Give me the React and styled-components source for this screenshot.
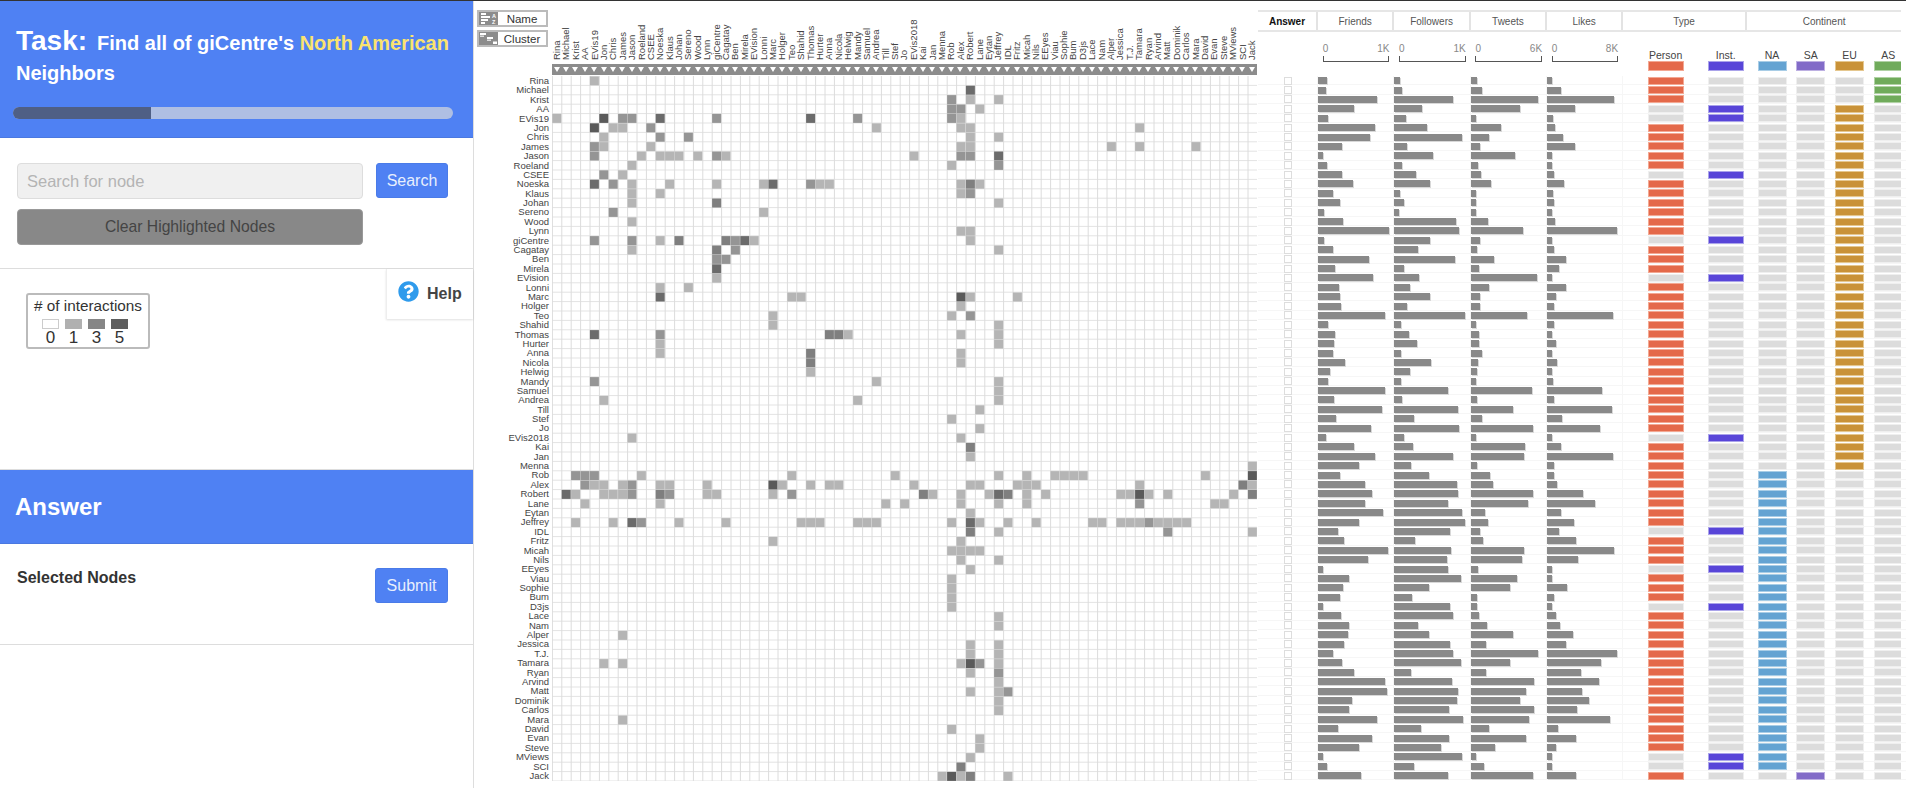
import React from 'react';
import styled, {createGlobalStyle} from 'styled-components';
import {FaQuestionCircle} from 'react-icons/fa';

const CELL = 9.4;
const NAMES = ['Rina','Michael','Krist','AA','EVis19','Jon','Chris','James','Jason','Roeland','CSEE','Noeska','Klaus','Johan','Sereno','Wood','Lynn','giCentre','Cagatay','Ben','Mirela','EVision','Lonni','Marc','Holger','Teo','Shahid','Thomas','Hurter','Anna','Nicola','Helwig','Mandy','Samuel','Andrea','Till','Stef','Jo','EVis2018','Kai','Jan','Menna','Rob','Alex','Robert','Lane','Eytan','Jeffrey','IDL','Fritz','Micah','Nils','EEyes','Viau','Sophie','Bum','D3js','Lace','Nam','Alper','Jessica','T.J.','Tamara','Ryan','Arvind','Matt','Dominik','Carlos','Mara','David','Evan','Steve','MViews','SCI','Jack'];

const SHADES = {1: '#b5b5b5', 2: '#959595', 3: '#7f7f7f', 4: '#6b6b6b', 5: '#5a5a5a'};

// [row, level, columns] : upper half only, the matrix is mirrored below
const LINKS = [
  [0,1,[4]],[1,4,[44]],[2,2,[42]],[2,1,[44,47]],[3,2,[42,43]],[3,1,[45]],
  [4,5,[5]],[4,2,[7,8,17,32,42]],[4,4,[11,27]],[4,1,[43]],
  [5,1,[6,7,34,43,44,62]],[5,2,[10]],[6,2,[11,14]],[6,1,[44,47]],
  [7,1,[10,43,44,59,62,68]],[8,1,[9,11,12,13,15,18,38]],[8,2,[17,43,44]],[8,4,[47]],
  [9,1,[42]],[9,2,[47]],[11,1,[12,17,22,28,29,43,45]],[11,4,[23]],[11,2,[27]],[11,3,[44]],
  [12,1,[43]],[12,2,[44]],[13,3,[17]],[13,1,[47]],[14,1,[22]],[16,1,[43,44]],
  [17,3,[18]],[17,2,[19]],[17,4,[20]],[17,1,[21,44]],[18,2,[19]],[18,1,[47]],
  [23,1,[25,26,44,49]],[23,5,[43]],[24,1,[43]],[25,1,[42]],[25,2,[44]],[26,1,[47]],
  [27,3,[29,30]],[27,1,[31,43,47]],[28,1,[47]],[29,1,[43]],[30,1,[43]],
  [32,1,[34,47]],[33,1,[47]],[34,1,[47]],[35,1,[45]],[36,1,[42]],[37,1,[45]],[38,1,[43]],
  [39,3,[44]],[40,1,[44]],[41,1,[74]],
  [42,1,[47,50,53,54,55,56,69]],[42,5,[74]],
  [43,1,[44,45,49,50,51,62,74]],[43,3,[73]],
  [44,1,[46,50,52,60,61,63,65,72]],[44,4,[47]],[44,3,[48,74]],[44,5,[62]],
  [45,1,[47,50,70,71]],[45,2,[62]],
  [47,1,[48,51,57,58,60,61,62,64,65,66,67]],[47,2,[63]],
  [48,2,[65]],[48,1,[74]],
];

// friends, followers, tweets, likes as bar widths
const BARS = [
  [9,6,6,5.3],[8,7.7,11.3,14],[58.7,58.3,67.7,66.7],[35.7,27.3,49.3,28],[9.7,11.7,5.3,5.7],
  [56.7,33,30,8.3],[51.7,67.3,18,16.3],[23.7,12.7,9.7,28],[5,38.3,44.7,5],[9,7.7,7.7,5.3],
  [24.3,22,10,6.7],[34.7,35.3,20.7,16.7],[15,5.7,5,6],[21.7,9.3,5,6.7],[6.3,5,5.3,5.3],
  [25,61.7,17.7,8],[71,65,52,70],[5.7,35.7,9,5.3],[15.3,23.3,6.7,7.3],[51.3,60.3,23.7,18.7],
  [17.4,9.5,8.7,12.4],[54.5,24.4,66.1,5],[20.7,16.1,18.6,18.6],[21.9,35.5,9.1,8.7],[23.1,12.4,9.1,7.4],
  [66.5,70.2,56.6,65.7],[9.5,6.6,5.4,6.6],[17.4,14.5,7.9,5],[15.7,22.3,7.9,8.7],[15.3,7,11.2,5.4],
  [26.9,36.8,7.4,9.5],[12.4,16.1,6.2,5],[10.3,6.2,5.4,6.2],[66.9,53.7,61.2,54.5],[15.7,7.9,6.2,6.6],
  [63.6,64,42.6,65.3],[17.8,19.4,11.2,14.9],[53.3,64.5,61.9,52.5],[7.9,9.9,5,5],[36.4,18.2,54.1,14],
  [56.6,58.3,52.9,65.7],[40.5,16.5,6.2,6.6],[22.3,34.3,19.4,7.4],[46.7,62.8,21.9,10.3],[53.7,63.6,62.4,36.4],
  [47.1,54.1,57.4,47.5],[64.5,67.8,14,14],[40.9,71.1,16.9,27],[19.8,55.8,9.5,11.6],[26.4,20.7,12,29.1],
  [70.2,57,53.7,67.4],[50.4,52.9,51.2,31.4],[5,54.1,7.4,5],[30.6,66.5,46.7,5],[25.2,35.1,39.7,20.2],
  [21.9,17.4,6.6,7],[5,55.4,6.2,5],[23.1,58.3,7.9,8.7],[31.4,23.6,16.1,12.8],[29.8,34.3,42.1,25.6],
  [26,55.4,15.3,19.4],[15.3,58.7,66.9,70.2],[23.6,66.9,39.7,54.1],[35.5,16.9,15.7,34.3],[67.4,57.4,63.2,52.1],
  [69,63.2,55.4,35.1],[33.5,62.4,49.6,42.1],[30.6,54.5,62.8,30.2],[58.7,69,58.1,63.2],[19.8,26.4,17.9,10.7],
  [53.7,55,54.9,29.1],[40.9,46.3,24,8.7],[5,67.4,5,5],[8.7,19.8,13.6,5.4],[43,53.3,61.9,29.1],
];

const INSTITUTIONS = [3,4,10,17,21,38,48,52,56,72,73];
const AXES = [['0','1K'],['0','1K'],['0','6K'],['0','8K']];
const TABS = ['Answer','Friends','Followers','Tweets','Likes','Type','Continent'];

const COLORS = {
  person: ['#e4694a', '#f3a893'],
  inst: ['#5845d8', '#aaa3ea'],
  na: ['#64a3d2', '#a9cde6'],
  sa: ['#826bc8', '#bdb0e2'],
  eu: ['#c99238', '#e5c78f'],
  as: ['#70ab5b', '#b1d2a5'],
  off: ['#dcdcdc', '#efefef'],
};

const continentOf = (i) => {
  if (i < 3) return 'as';
  if (i < 42) return 'eu';
  if (i < 74) return 'na';
  return 'sa';
};

const COLUMNS = '60px 76.4px 76.4px 76.3px 76px 124px 154px';

const GlobalStyle = createGlobalStyle`
html, body {
  margin: 0;
  padding: 0;
  background: #fff;
}
body {
  font-family: "Liberation Sans", Arial, sans-serif;
  overflow: hidden;
}
* {
  box-sizing: border-box;
}
`

const Page = styled.div`
display: flex;
width: 1906px;
height: 788px;
border-top: 1px solid #333;
overflow: hidden;
`

const Sidebar = styled.aside`
width: 474px;
flex: none;
display: flex;
flex-direction: column;
border-right: 1px solid #ddd;
`

const TaskHeader = styled.header`
height: 137px;
flex: none;
background: #4f81f3;
color: #fff;
padding: 25px 16px 0 13px;
font-weight: bold;
border-bottom: 1px solid #4a78e0;
`

const TaskTitle = styled.div`
padding-left: 3px;
font-size: 20px;
line-height: 30px;
height: 81px;
`

const TaskWord = styled.span`
font-size: 28px;
margin-right: 10px;
`

const Highlight = styled.span`
color: #fae36f;
`

const Progress = styled.div`
width: 440px;
height: 12px;
border-radius: 6px;
background: #afbfe3;
overflow: hidden;
`

const ProgressFill = styled.div`
width: 138px;
height: 100%;
background: #4f5f85;
`

const SearchSection = styled.section`
height: 131px;
flex: none;
display: grid;
grid-template-columns: 346px 72px;
grid-auto-rows: 36px;
column-gap: 13px;
row-gap: 10px;
padding: 25px 0 0 17px;
border-bottom: 1px solid #ddd;
`

const SearchInput = styled.input`
height: 36px;
width: 100%;
border: 1px solid #ddd;
border-radius: 4px;
background: #f0f0f0;
padding: 0 9px;
font-family: inherit;
font-size: 16.5px;
outline: none;
&::placeholder {
  color: #b4b4b4;
  opacity: 1;
}
`

const BlueButton = styled.button`
height: 35px;
width: ${(p) => p.$width}px;
border: 1px solid #4a7be8;
border-radius: 3px;
background: #4f81f3;
color: #e8effd;
font-family: inherit;
font-size: 16px;
padding: 0;
`

const ClearButton = styled.button`
height: 36px;
grid-column: 1;
border: 1px solid #999;
border-radius: 4px;
background: #888;
color: #444;
font-family: inherit;
font-size: 15.7px;
padding: 0;
`

const InfoSection = styled.section`
height: 201px;
flex: none;
display: flex;
justify-content: space-between;
align-items: flex-start;
padding-left: 26px;
border-bottom: 1px solid #ddd;
`

const Legend = styled.div`
width: 124px;
height: 56px;
margin-top: 24px;
border: 2px solid #bbb;
border-radius: 3px;
padding-top: 1px;
color: #333;
`

const LegendTitle = styled.div`
font-size: 15.3px;
line-height: 20px;
text-align: center;
white-space: nowrap;
`

const LegendGrid = styled.div`
display: grid;
grid-template-columns: repeat(4, 17px);
column-gap: 6px;
padding-left: 14px;
padding-top: 3px;
`

const LegendSwatch = styled.div`
height: 10px;
background: ${(p) => p.$color};
border: ${(p) => (p.$empty ? '1px solid #ccc' : 'none')};
`

const LegendValue = styled.div`
font-size: 17px;
line-height: 17px;
text-align: center;
`

const HelpBox = styled.div`
width: 87px;
height: 50px;
display: flex;
align-items: center;
gap: 8px;
padding-left: 11px;
background: #fff;
box-shadow: 0 1px 2px rgba(0, 0, 0, 0.12);
border-left: 1px solid #eee;
color: #444;
font-size: 16px;
font-weight: bold;
svg {
  color: #2f9bec;
  font-size: 21px;
  margin-top: -5px;
}
`

const AnswerHeader = styled.header`
height: 74px;
flex: none;
display: flex;
align-items: center;
padding: 0 0 0 15px;
background: #4f81f3;
border-bottom: 1px solid #4a78e0;
color: #fff;
font-size: 24px;
font-weight: bold;
`

const SelectedSection = styled.section`
height: 101px;
flex: none;
display: flex;
justify-content: space-between;
align-items: flex-start;
padding: 24px 25px 0 17px;
border-bottom: 1px solid #ddd;
`

const SelectedLabel = styled.span`
margin-top: 1px;
color: #333;
font-size: 16px;
font-weight: bold;
`

const MatrixPanel = styled.div`
width: 784px;
flex: none;
display: grid;
grid-template-columns: 78px 706px;
grid-template-rows: 75px 705px;
`

const SortButtons = styled.div`
display: flex;
flex-direction: column;
gap: 3px;
padding: 9px 0 0 3px;
`

const SortButton = styled.div`
width: 71px;
height: 17px;
display: flex;
align-items: center;
border: 2px solid #bbb;
color: #333;
font-size: 11.5px;
`

const SortIcon = styled.svg`
width: 19px;
height: 13px;
flex: none;
background: #8c8c8c;
`

const SortLabel = styled.span`
flex: 1;
text-align: center;
`

const ColumnHead = styled.div`
display: flex;
flex-direction: column;
`

const ColumnLabels = styled.div`
display: flex;
height: 59px;
margin-bottom: 4px;
`

const ColumnLabel = styled.div`
width: ${CELL}px;
flex: none;
writing-mode: vertical-rl;
transform: rotate(180deg);
white-space: nowrap;
font-size: 9.5px;
line-height: ${CELL}px;
color: #444;
`

const SortStrip = styled.div`
display: flex;
width: 705px;
height: 11px;
background: #8c8c8c;
`

const SortArrow = styled.div`
width: ${CELL}px;
flex: none;
display: flex;
justify-content: center;
padding-top: 3px;
&::before {
  content: "";
  width: 0;
  height: 0;
  border-left: 3px solid transparent;
  border-right: 3px solid transparent;
  border-top: 5px solid #fff;
}
`

const RowLabels = styled.div`
display: flex;
flex-direction: column;
padding-right: 3px;
`

const RowLabel = styled.div`
height: ${CELL}px;
flex: none;
line-height: ${CELL}px;
text-align: right;
white-space: nowrap;
font-size: 9.5px;
color: #444;
`

const MatrixSvg = styled.svg`
display: block;
`

const TablePanel = styled.div`
flex: 1;
min-width: 0;
`

const TabRow = styled.div`
display: grid;
grid-template-columns: ${COLUMNS};
height: 22px;
margin-top: 9px;
border-top: 2px solid #e6e6e6;
border-bottom: 2px solid #e6e6e6;
width: 643px;
`

const Tab = styled.div`
display: flex;
align-items: center;
justify-content: center;
border-right: ${(p) => (p.$last ? 'none' : '2px solid #e3e3e3')};
font-size: 10px;
color: ${(p) => (p.$bold ? '#111' : '#555')};
font-weight: ${(p) => (p.$bold ? 'bold' : 'normal')};
`

const AxisRow = styled.div`
display: grid;
grid-template-columns: ${COLUMNS};
height: 44px;
`

const AxisCell = styled.div`
padding: 11px 5px 0 4.7px;
`

const AxisTicks = styled.div`
display: flex;
justify-content: space-between;
font-size: 10px;
line-height: 11px;
color: #888;
`

const AxisBracket = styled.div`
height: 6px;
margin-top: 2px;
border: 1px solid #555;
border-top: none;
`

const SwatchCell = styled.div`
display: grid;
grid-template-columns: ${(p) => p.$cols};
column-gap: ${(p) => p.$gap}px;
padding-left: ${(p) => p.$pad}px;
overflow: hidden;
`

const SwatchCol = styled.div`
display: flex;
flex-direction: column;
align-items: center;
padding-top: 17px;
font-size: 10.5px;
line-height: 12px;
color: #444;
`

const Swatch = styled.div`
width: 100%;
height: 10px;
background: ${(p) => COLORS[p.$kind][0]};
border: 1px solid ${(p) => COLORS[p.$kind][1]};
`

const DataRow = styled.div`
display: grid;
grid-template-columns: ${COLUMNS};
height: ${CELL}px;
box-shadow: inset 0 -1px 0 #f6f6f6;
`

const CheckCell = styled.div`
display: flex;
align-items: center;
padding-left: 26px;
border-right: 1px solid #f6f6f6;
`

const CheckBox = styled.div`
width: 8px;
height: 8px;
background: #fff;
border: 1px solid #ddd;
`

const BarCell = styled.div`
display: flex;
align-items: center;
border-right: 1px solid #f6f6f6;
`

const Bar = styled.div`
height: 7px;
background: #898989;
box-shadow: 1px 1px 0 #d8d8d8;
`

const FlagCell = styled.div`
display: grid;
grid-template-columns: ${(p) => p.$cols};
column-gap: ${(p) => p.$gap}px;
padding-left: ${(p) => p.$pad}px;
align-items: center;
overflow: hidden;
`

const Flag = styled.div`
height: 8px;
background: ${(p) => COLORS[p.$kind][0]};
border: 1px solid ${(p) => COLORS[p.$kind][1]};
`

const TYPE_LAYOUT = {$cols: '36px 36px', $gap: 24, $pad: 24.6};
const CONT_LAYOUT = {$cols: 'repeat(4, 29px)', $gap: 9.7, $pad: 10.5};

const Matrix = () => {
  const size = CELL * NAMES.length;
  const cells = [];
  LINKS.forEach(([row, level, cols]) => {
    cols.forEach((col) => {
      cells.push([row, col, level], [col, row, level]);
    });
  });
  return (
    <MatrixSvg width={size} height={size} viewBox={`0 0 ${size} ${size}`}>
      {NAMES.map((n, i) => (
        <line key={`h${i}`} x1={0} x2={size} y1={(i + 1) * CELL} y2={(i + 1) * CELL} stroke="#e3e3e3" strokeWidth="1" />
      ))}
      {NAMES.map((n, i) => (
        <line key={`v${i}`} x1={i * CELL + 0.4} x2={i * CELL + 0.4} y1={0} y2={size} stroke="#dcdcdc" strokeWidth="1" />
      ))}
      {cells.map(([r, c, level]) => (
        <rect key={`${r}-${c}`} x={c * CELL + 0.3} y={r * CELL + 0.3} width={CELL - 0.4} height={CELL - 0.4} fill={SHADES[level]} />
      ))}
    </MatrixSvg>
  );
};

const NameIcon = () => (
  <SortIcon viewBox="0 0 19 13">
    <rect x="2" y="1" width="5" height="2" fill="#fff" />
    <rect x="2" y="4" width="9" height="2" fill="#fff" />
    <rect x="2" y="7" width="7" height="2" fill="#fff" />
    <rect x="2" y="10" width="4" height="2" fill="#fff" />
    <text x="13" y="5.5" fontSize="5.5" fill="#fff" fontFamily="Liberation Sans" fontWeight="bold">A</text>
    <text x="13" y="12" fontSize="5.5" fill="#fff" fontFamily="Liberation Sans" fontWeight="bold">Z</text>
  </SortIcon>
);

const ClusterIcon = () => (
  <SortIcon viewBox="0 0 19 13">
    <rect x="1" y="1" width="6" height="2" fill="#fff" />
    <rect x="1" y="3.5" width="4" height="1.5" fill="#ddd" />
    <rect x="8" y="5" width="6" height="2" fill="#fff" />
    <rect x="8" y="7.5" width="4" height="1.5" fill="#ddd" />
    <rect x="14" y="9.5" width="4" height="2.5" fill="#fff" />
  </SortIcon>
);

export default function App() {
  return (
    <Page>
      <GlobalStyle />
      <Sidebar>
        <TaskHeader>
          <TaskTitle>
            <TaskWord>Task:</TaskWord>Find all of giCentre's <Highlight>North American</Highlight> Neighbors
          </TaskTitle>
          <Progress><ProgressFill /></Progress>
        </TaskHeader>
        <SearchSection>
          <SearchInput placeholder="Search for node" readOnly />
          <BlueButton $width={72}>Search</BlueButton>
          <ClearButton>Clear Highlighted Nodes</ClearButton>
        </SearchSection>
        <InfoSection>
          <Legend>
            <LegendTitle># of interactions</LegendTitle>
            <LegendGrid>
              <LegendSwatch $color="#fff" $empty />
              <LegendSwatch $color="#b0b0b0" />
              <LegendSwatch $color="#868686" />
              <LegendSwatch $color="#5e5e5e" />
              <LegendValue>0</LegendValue>
              <LegendValue>1</LegendValue>
              <LegendValue>3</LegendValue>
              <LegendValue>5</LegendValue>
            </LegendGrid>
          </Legend>
          <HelpBox><FaQuestionCircle />Help</HelpBox>
        </InfoSection>
        <AnswerHeader>Answer</AnswerHeader>
        <SelectedSection>
          <SelectedLabel>Selected Nodes</SelectedLabel>
          <BlueButton $width={73}>Submit</BlueButton>
        </SelectedSection>
      </Sidebar>

      <MatrixPanel>
        <SortButtons>
          <SortButton><NameIcon /><SortLabel>Name</SortLabel></SortButton>
          <SortButton><ClusterIcon /><SortLabel>Cluster</SortLabel></SortButton>
        </SortButtons>
        <ColumnHead>
          <ColumnLabels>
            {NAMES.map((n) => <ColumnLabel key={n}>{n}</ColumnLabel>)}
          </ColumnLabels>
          <SortStrip>
            {NAMES.map((n) => <SortArrow key={n} />)}
          </SortStrip>
        </ColumnHead>
        <RowLabels>
          {NAMES.map((n) => <RowLabel key={n}>{n}</RowLabel>)}
        </RowLabels>
        <Matrix />
      </MatrixPanel>

      <TablePanel>
        <TabRow>
          {TABS.map((t, i) => (
            <Tab key={t} $bold={i === 0} $last={i === TABS.length - 1}>{t}</Tab>
          ))}
        </TabRow>
        <AxisRow>
          <div />
          {AXES.map((a, i) => (
            <AxisCell key={i}>
              <AxisTicks><span>{a[0]}</span><span>{a[1]}</span></AxisTicks>
              <AxisBracket />
            </AxisCell>
          ))}
          <SwatchCell {...TYPE_LAYOUT}>
            <SwatchCol>Person<Swatch $kind="person" /></SwatchCol>
            <SwatchCol>Inst.<Swatch $kind="inst" /></SwatchCol>
          </SwatchCell>
          <SwatchCell {...CONT_LAYOUT}>
            <SwatchCol>NA<Swatch $kind="na" /></SwatchCol>
            <SwatchCol>SA<Swatch $kind="sa" /></SwatchCol>
            <SwatchCol>EU<Swatch $kind="eu" /></SwatchCol>
            <SwatchCol>AS<Swatch $kind="as" /></SwatchCol>
          </SwatchCell>
        </AxisRow>
        {NAMES.map((n, i) => {
          const isInst = INSTITUTIONS.includes(i);
          const continent = continentOf(i);
          return (
            <DataRow key={n}>
              <CheckCell><CheckBox /></CheckCell>
              {BARS[i].map((w, j) => (
                <BarCell key={j}><Bar style={{width: w}} /></BarCell>
              ))}
              <FlagCell {...TYPE_LAYOUT}>
                <Flag $kind={isInst ? 'off' : 'person'} />
                <Flag $kind={isInst ? 'inst' : 'off'} />
              </FlagCell>
              <FlagCell {...CONT_LAYOUT}>
                {['na', 'sa', 'eu', 'as'].map((c) => (
                  <Flag key={c} $kind={c === continent ? c : 'off'} />
                ))}
              </FlagCell>
            </DataRow>
          );
        })}
      </TablePanel>
    </Page>
  );
}
